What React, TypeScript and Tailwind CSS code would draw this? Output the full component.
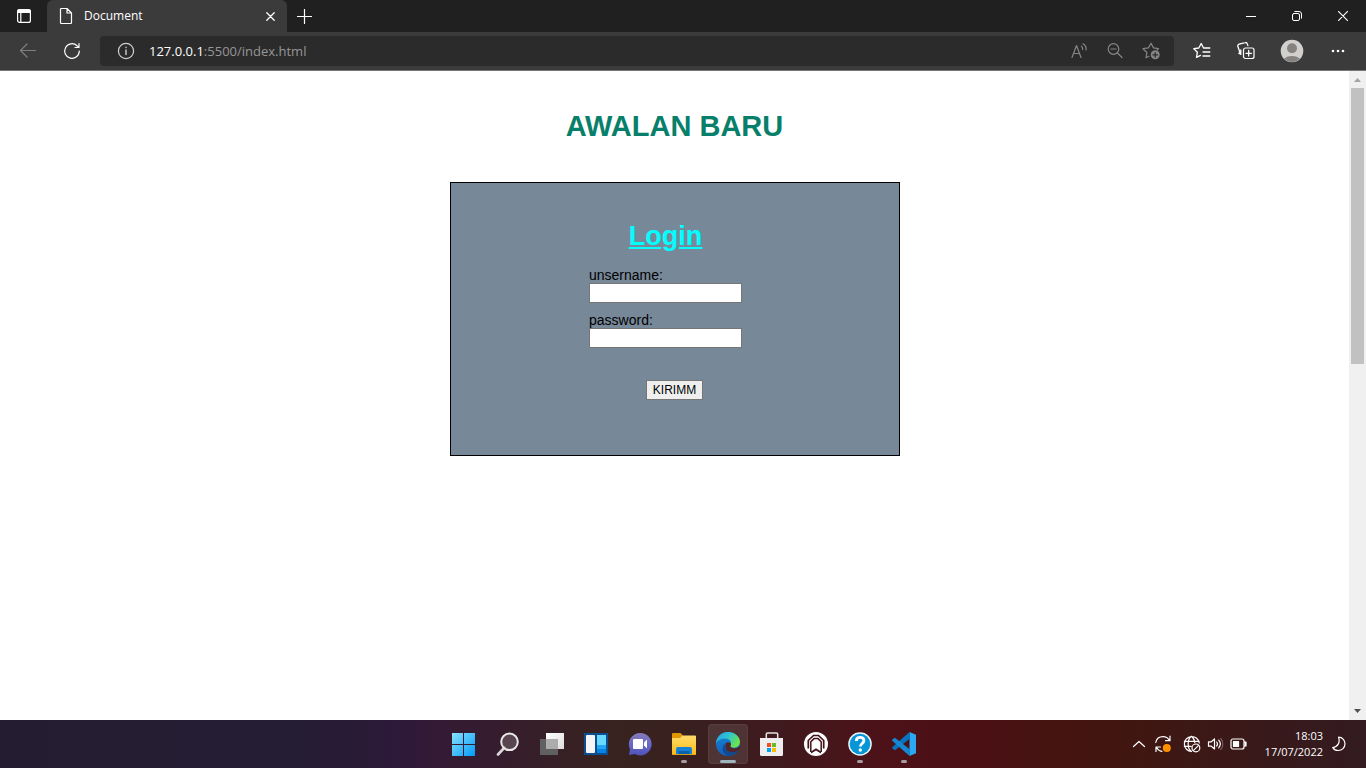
import type { ReactNode, SVGProps } from "react";

const UI = "font-['Open_Sans','Noto_Sans',sans-serif]";

function Line({ children, ...rest }: SVGProps<SVGSVGElement>) {
  return (
    <svg viewBox="0 0 18 18" width="18" height="18" fill="none" stroke="currentColor" strokeWidth="1.2" strokeLinecap="round" strokeLinejoin="round" aria-hidden="true" {...rest}>
      {children}
    </svg>
  );
}

function IconButton({ label, className, children }: { label: string; className: string; children: ReactNode }) {
  return (
    <button type="button" aria-label={label} className={`flex items-center justify-center shrink-0 ${className}`}>
      {children}
    </button>
  );
}

function TabStrip() {
  return (
    <header className="flex h-8 bg-[#202020] text-white">
      <IconButton label="Tab actions" className="w-[47px]">
        <Line width="14" height="14" viewBox="0 0 14 14">
          <rect x=".6" y=".6" width="12.800" height="12.800" rx="2" />
          <path d="M1 1h12v2.500H1z" fill="currentColor" />
          <path d="M3.800 4v9" />
        </Line>
      </IconButton>
      <div className="flex w-60 items-center rounded-t-md bg-[#3b3b3b] pl-3 pr-px">
        <Line width="14" height="16" viewBox="0 0 14 16">
          <path d="M1.500 1.500a1 1 0 0 1 1-1h5.500l4.500 4.500v9.500a1 1 0 0 1-1 1h-9a1 1 0 0 1-1-1zM8 .5v4.500h4.500" />
        </Line>
        <span className="flex-1 pl-[11px] text-xs">Document</span>
        <IconButton label="Close tab" className="w-8">
          <Line width="9" height="9" viewBox="0 0 9 9"><path d="m.8.8 7.400 7.400m0-7.400L.8 8.200" strokeWidth="1.300" /></Line>
        </IconButton>
      </div>
      <IconButton label="New tab" className="w-[35px]">
        <Line width="15" height="15" viewBox="0 0 15 15"><path d="M7.500.5v14M.5 7.500h14" /></Line>
      </IconButton>
      <div className="ml-auto flex">
        <IconButton label="Minimize" className="w-[46px]">
          <Line width="10" height="10" viewBox="0 0 10 10" strokeWidth="1"><path d="M0 5.500h10" /></Line>
        </IconButton>
        <IconButton label="Restore" className="w-[46px]">
          <Line width="10" height="10" viewBox="0 0 10 10" strokeWidth="1">
            <rect x=".5" y="2.500" width="7" height="7" rx="1.500" />
            <path d="M2.800.5H7a2.500 2.500 0 0 1 2.500 2.500v4.200" />
          </Line>
        </IconButton>
        <IconButton label="Close" className="w-[46px]">
          <Line width="10" height="10" viewBox="0 0 10 10" strokeWidth="1.100"><path d="m.3.3 9.400 9.400m0-9.400L.3 9.700" /></Line>
        </IconButton>
      </div>
    </header>
  );
}

function Toolbar() {
  return (
    <div className="flex h-[39px] items-center border-b border-[#767676] bg-[#3b3b3b] pr-2 text-white">
      <IconButton label="Back" className="ml-2 w-10 text-[#7f7f7f]">
        <Line><path d="M16.500 8.500H1.500M8 2 1.500 8.500 8 15" /></Line>
      </IconButton>
      <IconButton label="Refresh" className="ml-1 w-10">
        <Line><path d="M16.300 9A7.300 7.300 0 1 1 14 3.700l1.800 1.700M16 1.500v4h-4" /></Line>
      </IconButton>
      <div className="ml-2 flex h-[30px] flex-1 items-center rounded bg-[#2b2b2b] pl-[17px] pr-[5px]">
        <Line stroke="#d0d0d0"><circle cx="9" cy="9" r="7.600" /><path d="M9 8v4.500M9 5.300v.2" strokeWidth="1.400" /></Line>
        <div className="ml-[14px] flex flex-1 text-[13px] leading-5">
          <label htmlFor="address">127.0.0.1</label>
          <input id="address" defaultValue=":5500/index.html" className="min-w-0 flex-1 bg-transparent text-[#969696] outline-none" />
        </div>
        <div className="flex text-[#858585]">
          <IconButton label="Read aloud" className="w-9">
            <Line><path d="m2 15.500 4.500-12L11 15.500M3.500 11.500h6M11.500 4.200c1 .8 1.300 2 1.100 3.300M13 1.800c2.500 1.500 3.500 3.700 3 6.200" strokeWidth="1.200" /></Line>
          </IconButton>
          <IconButton label="Zoom out" className="w-9">
            <Line><circle cx="7.500" cy="7" r="5.300" /><path d="m11.500 11 4.500 4.500M5 7h5" /></Line>
          </IconButton>
          <IconButton label="Add to favorites" className="w-9">
            <Line><path d="M7 14.300 4 15.800l.9-5.300L1 6.700l5.400-.8L9 1.200l2.500 4.700 5 .8-1.300 1.300" /><circle cx="13.200" cy="12.800" r="4.500" fill="currentColor" stroke="none" /><path d="M13.200 10.500v4.600M10.900 12.800h4.600" stroke="#2b2b2b" /></Line>
          </IconButton>
        </div>
      </div>
      <IconButton label="Favorites" className="ml-2 w-10">
        <Line><path d="M10.500 6 8.200 1.500 5.800 6 .8 6.700l3.600 3.500-.9 5.200 4-2M10.500 6h6.300M10 10h6.800M10 14h6.800" strokeWidth="1.300" /></Line>
      </IconButton>
      <IconButton label="Collections" className="ml-1 w-10">
        <Line><rect x="6.500" y="6" width="10.500" height="10.500" rx="2" /><path d="M11.700 8.500v5.500M9 11.300h5.500M4 12.300 1.800 11.200M3.800 11.800V8M3.500 12 .9 4.500a1.800 1.800 0 0 1 1.200-2.300l6-1.500a1.800 1.800 0 0 1 2.200 1.200l.6 1.700" strokeWidth="1.300" /></Line>
      </IconButton>
      <IconButton label="Profile" className="ml-[6px] w-10">
        <svg width="24" height="24" viewBox="0 0 24 24" aria-hidden="true">
          <circle cx="12" cy="12" r="11.300" fill="#d2d0ce" />
          <circle cx="12" cy="9.200" r="5" fill="#85827f" />
          <path d="M4.200 19.800a8.500 4.800 0 0 1 15.600 0A11.300 11.300 0 0 1 4.200 19.800" fill="#85827f" />
        </svg>
      </IconButton>
      <IconButton label="Settings and more" className="ml-[6px] w-10">
        <svg width="14" height="4" viewBox="0 0 14 4" fill="currentColor" aria-hidden="true"><circle cx="2" cy="2" r="1.300" /><circle cx="7" cy="2" r="1.300" /><circle cx="12" cy="2" r="1.300" /></svg>
      </IconButton>
    </div>
  );
}

function Field({ id, label, type }: { id: string; label: string; type: string }) {
  return (
    <div className="flex flex-col">
      <label htmlFor={id} className="text-sm leading-4">{label}</label>
      <input id={id} type={type} className="h-5 w-[153px] border border-[#767676] bg-white px-px text-xs outline-none" />
    </div>
  );
}

function LoginPage() {
  return (
    <main className="flex flex-1 flex-col items-center bg-white font-['Liberation_Sans',Arial,sans-serif] text-black">
      <h1 className="mt-[38px] text-[29px] font-bold leading-[34px] text-[#087f6b]">AWALAN BARU</h1>
      <form className="mt-[39px] flex w-[450px] flex-col items-center border border-black bg-[#778899] pb-[55px] pt-[37px]" onSubmit={(e) => e.preventDefault()}>
        <div className="mr-[18px] flex flex-col items-center">
          <h2 className="text-[27px] font-bold leading-8 text-[#00ffff] underline">Login</h2>
          <div className="mt-[15px] flex flex-col gap-[9px]">
            <Field id="username" label="unsername:" type="text" />
            <Field id="password" label="password:" type="password" />
          </div>
        </div>
        <button type="submit" className="mt-8 h-5 border border-[#767676] bg-[#efefef] px-[6px] text-xs leading-4">KIRIMM</button>
      </form>
    </main>
  );
}

function Scrollbar() {
  return (
    <div aria-hidden="true" className="flex w-[17px] flex-col items-center justify-between bg-[#f0f0f0]">
      <div className="flex w-full flex-col items-center">
        <svg width="17" height="17" viewBox="0 0 17 17"><path d="m5 11 3.500-4L12 11z" fill="#a3a3a3" /></svg>
        <div className="h-[276px] w-[13px] bg-[#c1c1c1]" />
      </div>
      <svg width="17" height="17" viewBox="0 0 17 17"><path d="m5 6 3.500 4L12 6z" fill="#505050" /></svg>
    </div>
  );
}

const svg24 = { width: 24, height: 24, viewBox: "0 0 24 24", "aria-hidden": true } as const;

const apps: { name: string; state?: "open" | "active"; icon: ReactNode }[] = [
  {
    name: "Start",
    icon: (
      <svg {...svg24}>
        <defs><linearGradient id="win" gradientUnits="userSpaceOnUse" x1="0" y1="0" x2="24" y2="24"><stop stopColor="#8be4ff" /><stop offset="1" stopColor="#0098f8" /></linearGradient></defs>
        <path d="M0 1h11v11H0zM12 1h11v11H12zM0 13h11v11H0zM12 13h11v11H12z" fill="url(#win)" />
      </svg>
    ),
  },
  {
    name: "Search",
    icon: (
      <svg {...svg24} fill="none">
        <path d="m8.500 15.500-6.500 7" stroke="#d8d8d8" strokeWidth="2.600" strokeLinecap="round" />
        <circle cx="13.500" cy="9.800" r="8.300" fill="#665760" fillOpacity=".7" stroke="#e8e8e8" strokeWidth="2" />
      </svg>
    ),
  },
  {
    name: "Task View",
    icon: (
      <svg {...svg24}>
        <defs><linearGradient id="tvw" x2="1" y2="1"><stop stopColor="#fff" /><stop offset="1" stopColor="#ddd" /></linearGradient></defs>
        <path d="M0 7h18v16H0z" fill="#606060" />
        <path d="M6 1h18v16H6z" fill="url(#tvw)" />
        <path d="M6 7h12v10H6z" fill="#acacac" />
      </svg>
    ),
  },
  {
    name: "Widgets",
    icon: (
      <svg {...svg24}>
        <path d="M0 1h24v22H0z" fill="#0c4f91" />
        <rect x="2" y="3" width="9" height="18" rx="1" fill="#f5f5f5" />
        <path d="M13 3h9v10h-9z" fill="#69d9ff" />
        <path d="M13 13h9v8h-9z" fill="#0784e5" />
        <path d="M13 13h9v4h-9z" fill="#22a5f4" />
      </svg>
    ),
  },
  {
    name: "Chat",
    icon: (
      <svg {...svg24}>
        <defs><linearGradient id="chat" x2="0" y2="1"><stop stopColor="#8779b5" /><stop offset=".5" stopColor="#6869c8" /><stop offset="1" stopColor="#5052ba" /></linearGradient></defs>
        <path d="M12 1a11.200 11.200 0 1 1-5 21L1 23l1-5.800A11.200 11.200 0 0 1 12 1" fill="url(#chat)" />
        <rect x="5" y="7" width="10" height="10" rx="1" fill="#fff" />
        <path d="m16 10.500 3-3v9l-3-3z" fill="#fff" />
      </svg>
    ),
  },
  {
    name: "File Explorer",
    state: "open",
    icon: (
      <svg {...svg24}>
        <defs><linearGradient id="fold" x2="0" y2="1"><stop stopColor="#ffda6a" /><stop offset="1" stopColor="#fbbc16" /></linearGradient></defs>
        <path d="M0 2a1 1 0 0 1 1-1h7.500L11 3.500V8H0z" fill="#df9600" />
        <path d="M0 6h8l2.500-2.500H23a1 1 0 0 1 1 1V22a1 1 0 0 1-1 1H1a1 1 0 0 1-1-1z" fill="url(#fold)" />
        <path d="M4 22.300v-5.300a2 2 0 0 1 2-2h12a2 2 0 0 1 2 2v5.300z" fill="#1582d6" />
        <path d="M6.500 19h11v3.300h-11z" fill="#0b60ac" />
        <path d="M0 22.300h24v.7H0z" fill="#e5a20b" />
      </svg>
    ),
  },
  {
    name: "Microsoft Edge",
    state: "active",
    icon: (
      <svg {...svg24}>
        <defs>
          <linearGradient id="edgeTop" x2="1" y2=".5"><stop stopColor="#279bdf" /><stop offset=".5" stopColor="#2ec4d4" /><stop offset="1" stopColor="#6be34b" /></linearGradient>
          <linearGradient id="edgeMid" x2="0" y2="1"><stop stopColor="#1788d4" /><stop offset="1" stopColor="#125dbc" /></linearGradient>
        </defs>
        <circle cx="12" cy="12" r="12" fill="url(#edgeMid)" />
        <path d="M0 11.500C.3 4.800 5.500 0 12 0c6.800 0 12 4.600 12 9.800 0 3.700-2.800 5.900-6 5.900-2.800 0-4-.9-4-1.600 0-.6 1-1 1-2.900 0-2.700-2.600-4.700-6-4.700-4.500 0-7.800 2-9 5" fill="url(#edgeTop)" />
        <path d="M9.500 11c-2.500 3.800.2 9.300 6.300 9.300 2.500 0 4.600-.8 6.300-2 .4-.3.700.1.500.5C20.400 22.100 16.500 24 12.800 24 8 22.800 6 18.700 7 14.500c.4-1.500 1.300-2.700 2.500-3.500" fill="#124a91" />
        <path d="M14.300 14c0 1.100 1.500 2.200 4.200 2.200 2 0 3.700-.7 5.500-2.500v4l-1.500.5c-2 1.400-4 2-6.500 2-4.200 0-6.800-2.800-6.800-6 0-1.500.4-2.700 1.500-3.700 1.700-.6 4.500.2 4.300 2.200Z" fill="#51262b" />
      </svg>
    ),
  },
  {
    name: "Microsoft Store",
    icon: (
      <svg {...svg24}>
        <path d="M6.300 7V2.200c0-.8.4-1.200 1.200-1.200h9c.8 0 1.200.4 1.200 1.200V7" fill="none" stroke="#e4e4e4" strokeWidth="1.500" />
        <path d="M0 6h23v16.500a1.500 1.500 0 0 1-1.500 1.500h-20A1.500 1.500 0 0 1 0 22.500z" fill="#eeeeee" />
        <path d="M7 11h4v4H7z" fill="#f25022" /><path d="M12 11h4v4h-4z" fill="#6ebc1b" /><path d="M7 16h4v4H7z" fill="#00a4ef" /><path d="M12 16h4v4h-4z" fill="#ffb900" />
      </svg>
    ),
  },
  {
    name: "Arch",
    icon: (
      <svg {...svg24} fill="none" stroke="#431318">
        <circle cx="12" cy="12" r="12" fill="#fff" stroke="none" />
        <path d="M4.300 16.500V8.500L9.500 3.500h5l5.200 5v8" strokeWidth="1.700" />
        <path d="M6.800 20V9.800L10 6.600h4l3.200 3.200V20" strokeWidth="1.500" />
        <path d="m7 19.500 5-3.300 5 3.300v2l-5-3-5 3z" fill="#431318" stroke="none" />
      </svg>
    ),
  },
  {
    name: "Get Help",
    state: "open",
    icon: (
      <svg {...svg24}>
        <circle cx="12" cy="12" r="11.800" fill="#e9f4fa" />
        <circle cx="12" cy="12" r="10.300" fill="#0695d7" />
        <path d="M8.300 8.900c0-2.200 1.500-3.500 3.800-3.500s3.800 1.200 3.800 3.200c0 2.900-3.500 2.900-3.500 5.900" fill="none" stroke="#fff" strokeWidth="2.800" />
        <circle cx="12.300" cy="18" r="1.700" fill="#fff" />
      </svg>
    ),
  },
  {
    name: "Visual Studio Code",
    state: "open",
    icon: (
      <svg {...svg24}>
        <path d="M17.500 0 24 2.700v18.600L17.500 24z" fill="#2aa8f2" />
        <path d="m17.500 0 .5 6.500L3 18.200.2 16.500v-1.300z" fill="#0874bd" />
        <path d="m17.500 24 .5-6.500L3 5.800.2 7.500v1.300z" fill="#1687d2" />
      </svg>
    ),
  },
];

function Taskbar() {
  return (
    <footer className={`grid h-12 grid-cols-[1fr_auto_1fr] items-center bg-[linear-gradient(90deg,#241c30_0%,#251d33_22%,#2d193a_29%,#351a33_33%,#38231f_45%,#38201f_50%,#401a1e_57%,#4d1118_65%,#4a1014_72%,#42160f_81%,#3c1816_88%,#331b21_100%)] pl-[2px] text-white ${UI}`}>
      <nav aria-label="Taskbar" className="col-start-2 flex gap-1">
        {apps.map((app) => (
          <button key={app.name} type="button" aria-label={app.name} className={`relative flex h-10 w-10 items-center justify-center rounded ${app.state === "active" ? "border border-white/5 bg-white/10" : ""}`}>
            {app.icon}
            {app.state === "open" && <span className="absolute bottom-px h-[3px] w-[6px] rounded-full bg-[#a79da0]" />}
            {app.state === "active" && <span className="absolute bottom-0 h-[3px] w-4 rounded-full bg-[#9fb5bd]" />}
          </button>
        ))}
      </nav>
      <div className="flex items-center justify-end pr-5">
        <IconButton label="Show hidden icons" className="w-6">
          <Line width="14" height="14" viewBox="0 0 14 14"><path d="m1.500 9.500 5.500-5 5.500 5" /></Line>
        </IconButton>
        <IconButton label="Update status" className="w-6">
          <Line>
            <path d="M1.800 7.500C2.500 3.800 5.500 1.700 9 1.700c2.800 0 5 1.300 6.200 3.500M16 1.200v4.500h-4.500M6.500 12H2v4.500M2.500 12.500c1 2 3 3.500 5.500 3.800" />
            <circle cx="12.800" cy="13" r="4" fill="#ff9100" stroke="none" />
          </Line>
        </IconButton>
        <IconButton label="Network, volume and battery" className="ml-1 w-[74px] gap-[6px]">
          <Line>
            <path d="M8.500 16.500A7.500 7.500 0 1 1 16.300 8M1.300 6.300h14.900M1.300 11.300h7M8.500 16.500c-4.500-3-4.500-12 0-15.200 1.800 1.600 3 3.800 3.300 6" />
            <circle cx="12.900" cy="12.900" r="3.900" /><path d="m10.300 15.600 5.300-5.300" />
          </Line>
          <Line width="17" height="16" viewBox="0 0 17 16"><path d="M1.500 5.800h2.800L7.500 3v10l-3.200-2.800H1.500zM9.700 6c1 1.300 1 2.800 0 4M11.700 4.200c2 2.300 2 5.300 0 7.600" /><path d="M13.800 2.600c2.700 3.200 2.700 7.600 0 10.800" opacity=".35" /></Line>
          <Line width="18" height="12" viewBox="0 0 18 12"><rect x="1" y="1" width="13" height="10" rx="2" /><path d="M3.500 3.500h5v5h-5z" fill="currentColor" /><path d="M14.500 4h1.500v4h-1.500" fill="currentColor" /></Line>
        </IconButton>
        <button type="button" className="ml-3 text-right text-[11px] leading-4"><time className="block">18:03</time><time className="block">17/07/2022</time></button>
        <IconButton label="Focus assist" className="ml-[9px] w-[14px]">
          <Line width="14" height="16" viewBox="0 0 14 16"><path d="M6.500 1.200c4.300 0 6.500 3.400 6.500 6.600 0 4-3.100 6.700-6.700 6.700-2.400 0-4.500-1.200-5.500-2.900C5.600 11 8.500 6.500 6.500 1.200Z" /></Line>
        </IconButton>
      </div>
    </footer>
  );
}

export default function App() {
  return (
    <div className="flex min-h-screen flex-col">
      <div className={UI}>
        <TabStrip />
        <Toolbar />
      </div>
      <div className="flex flex-1">
        <LoginPage />
        <Scrollbar />
      </div>
      <Taskbar />
    </div>
  );
}
